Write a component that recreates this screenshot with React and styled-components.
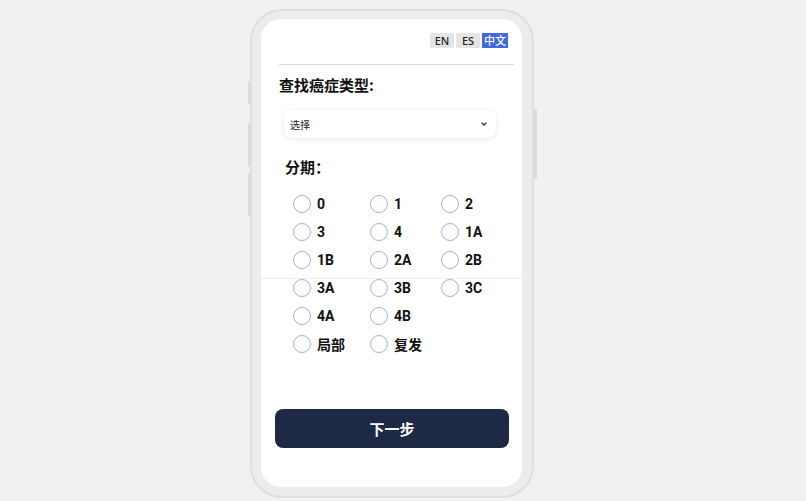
import React from 'react'
import styled, { createGlobalStyle } from 'styled-components'

const GlobalStyle = createGlobalStyle`
  html, body { margin: 0; padding: 0; background: #f1f1f1; }
  body { font-family: "Noto Sans", "Noto Sans CJK SC", sans-serif; color: #111; }
`

const Page = styled.div`
  width: 806px;
  height: 501px;
  padding: 9px 0 0 250px;
  box-sizing: border-box;
`

const Phone = styled.div`
  position: relative;
  width: 284px;
  height: 489px;
  box-sizing: border-box;
  padding: 8px 10px 9px 9px;
  border: 2px solid #dfdfdf;
  border-radius: 32px;
  background: #ececec;
`

const SideKey = styled.div`
  position: absolute;
  width: 3px;
  background: #dcdcdc;
  border-radius: 2px;
  ${p => (p.$right ? 'right: -5px;' : 'left: -4px;')}
  top: ${p => p.$top}px;
  height: ${p => p.$h}px;
`

const Screen = styled.div`
  position: relative;
  height: 100%;
  background: #fff;
  border-radius: 20px;
  display: flex;
  flex-direction: column;
  overflow: hidden;
`

const Fold = styled.div`
  position: absolute;
  left: 0;
  right: 0;
  top: 259px;
  height: 1px;
  background: #ededed;
`

const LangBar = styled.div`
  display: flex;
  justify-content: flex-end;
  gap: 2px;
  margin: 14px 14px 0 0;
`

const LangButton = styled.button`
  border: none;
  padding: 0;
  height: 15px;
  width: ${p => p.$w}px;
  font-family: "Noto Sans", "Noto Sans CJK SC", sans-serif;
  font-size: 11px;
  font-weight: 500;
  line-height: 15px;
  background: ${p => (p.$active ? '#4169e1' : '#e4e4e4')};
  color: ${p => (p.$active ? '#fff' : '#222')};
`

const Divider = styled.div`
  height: 1px;
  background: #dcdcdc;
  margin: 16px 8px 0 18px;
`

const Title = styled.h2`
  margin: 10px 0 0 18px;
  font-size: 15px;
  line-height: 20px;
  font-weight: 700;
  font-family: "Noto Sans CJK SC", sans-serif;
`

const Select = styled.div`
  margin: 15px 26px 0 23px;
  height: 28px;
  border-radius: 8px;
  background: #fff;
  box-shadow: 0 1px 5px rgba(0, 0, 0, 0.1);
  display: flex;
  align-items: center;
  justify-content: space-between;
  padding: 0 8px 0 6px;
  font-size: 10px;
  color: #222;
  font-family: "Noto Sans CJK SC", sans-serif;
`

const Label = styled.div`
  margin: 19px 0 0 24px;
  font-size: 15px;
  line-height: 20px;
  font-weight: 700;
  font-family: "Noto Sans CJK SC", sans-serif;
`

const Grid = styled.div`
  display: grid;
  grid-template-columns: 77px 71px 70px;
  grid-auto-rows: 28px;
  margin: 13px 0 0 32px;
`

const Option = styled.label`
  display: flex;
  align-items: center;
  gap: 6px;
  font-size: 14px;
  font-weight: 700;
  font-family: "Roboto", "Noto Sans CJK SC", sans-serif;
  color: #111;
`

const Circle = styled.span`
  width: 18px;
  height: 18px;
  box-sizing: border-box;
  border-radius: 50%;
  border: 1.5px solid #a7abea;
  background: #fff;
`

const NextButton = styled.button`
  margin: auto 13px 39px 14px;
  height: 39px;
  border: none;
  border-radius: 8px;
  background: #1e2a45;
  color: #fff;
  font-size: 15px;
  font-weight: 700;
  font-family: "Noto Sans CJK SC", sans-serif;
`

const stages = ['0', '1', '2', '3', '4', '1A', '1B', '2A', '2B', '3A', '3B', '3C', '4A', '4B', null, '局部', '复发']

export default function App() {
  return (
    <Page>
      <GlobalStyle />
      <Phone>
        <SideKey $top={70} $h={23} />
        <SideKey $top={112} $h={44} />
        <SideKey $top={162} $h={43} />
        <SideKey $right $top={98} $h={70} />
        <Screen>
          <Fold />
          <LangBar>
            <LangButton $w={24}>EN</LangButton>
            <LangButton $w={24}>ES</LangButton>
            <LangButton $w={26} $active>中文</LangButton>
          </LangBar>
          <Divider />
          <Title>查找癌症类型:</Title>
          <Select>
            <span>选择</span>
            <svg width="8" height="8" viewBox="0 0 24 24" fill="none" stroke="#333" strokeWidth="4" strokeLinecap="round" strokeLinejoin="round">
              <path d="M6 9l6 6 6-6" />
            </svg>
          </Select>
          <Label>分期：</Label>
          <Grid>
            {stages.map((s, i) =>
              s === null ? <span key={i} /> : (
                <Option key={i}>
                  <Circle />
                  {s}
                </Option>
              )
            )}
          </Grid>
          <NextButton>下一步</NextButton>
        </Screen>
      </Phone>
    </Page>
  )
}
